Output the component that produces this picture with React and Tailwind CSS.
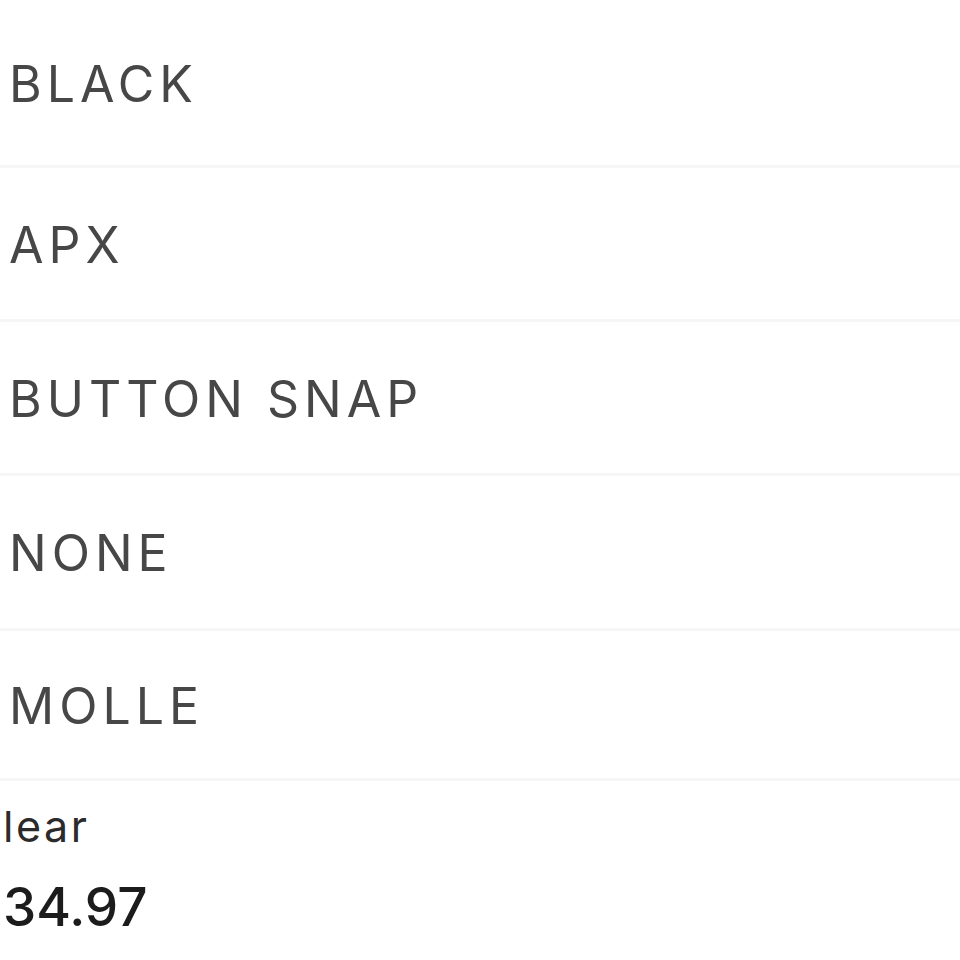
import React from 'react';

const options = [
  { label: 'BLACK', h: 'h-[168px]' },
  { label: 'APX', h: 'h-[154px]' },
  { label: 'BUTTON SNAP', h: 'h-[154px]' },
  { label: 'NONE', h: 'h-[155px]' },
  { label: 'MOLLE', h: 'h-[150px]' },
];

export default function App() {
  return (
    <div className="w-[960px] h-[960px] bg-white overflow-hidden" style={{ fontFamily: 'Inter, "Liberation Sans", sans-serif' }}>
      <ul className="flex flex-col">
        {options.map((o) => (
          <li key={o.label} className={`${o.h} flex items-center pt-[2px] pl-[9px] border-b-[3px] border-[#f6f6f6]`}>
            <span className="text-[50px] leading-none tracking-[0.1em] text-[#474747] font-normal">{o.label}</span>
          </li>
        ))}
      </ul>
      <div className="pl-[3px] pt-[24px]">
        <p className="text-[43px] leading-none tracking-[0.06em] text-[#2b2b2b]">lear</p>
        <p className="mt-[33px] text-[53px] leading-none font-medium text-[#1c1c1c]">34.97</p>
      </div>
    </div>
  );
}
